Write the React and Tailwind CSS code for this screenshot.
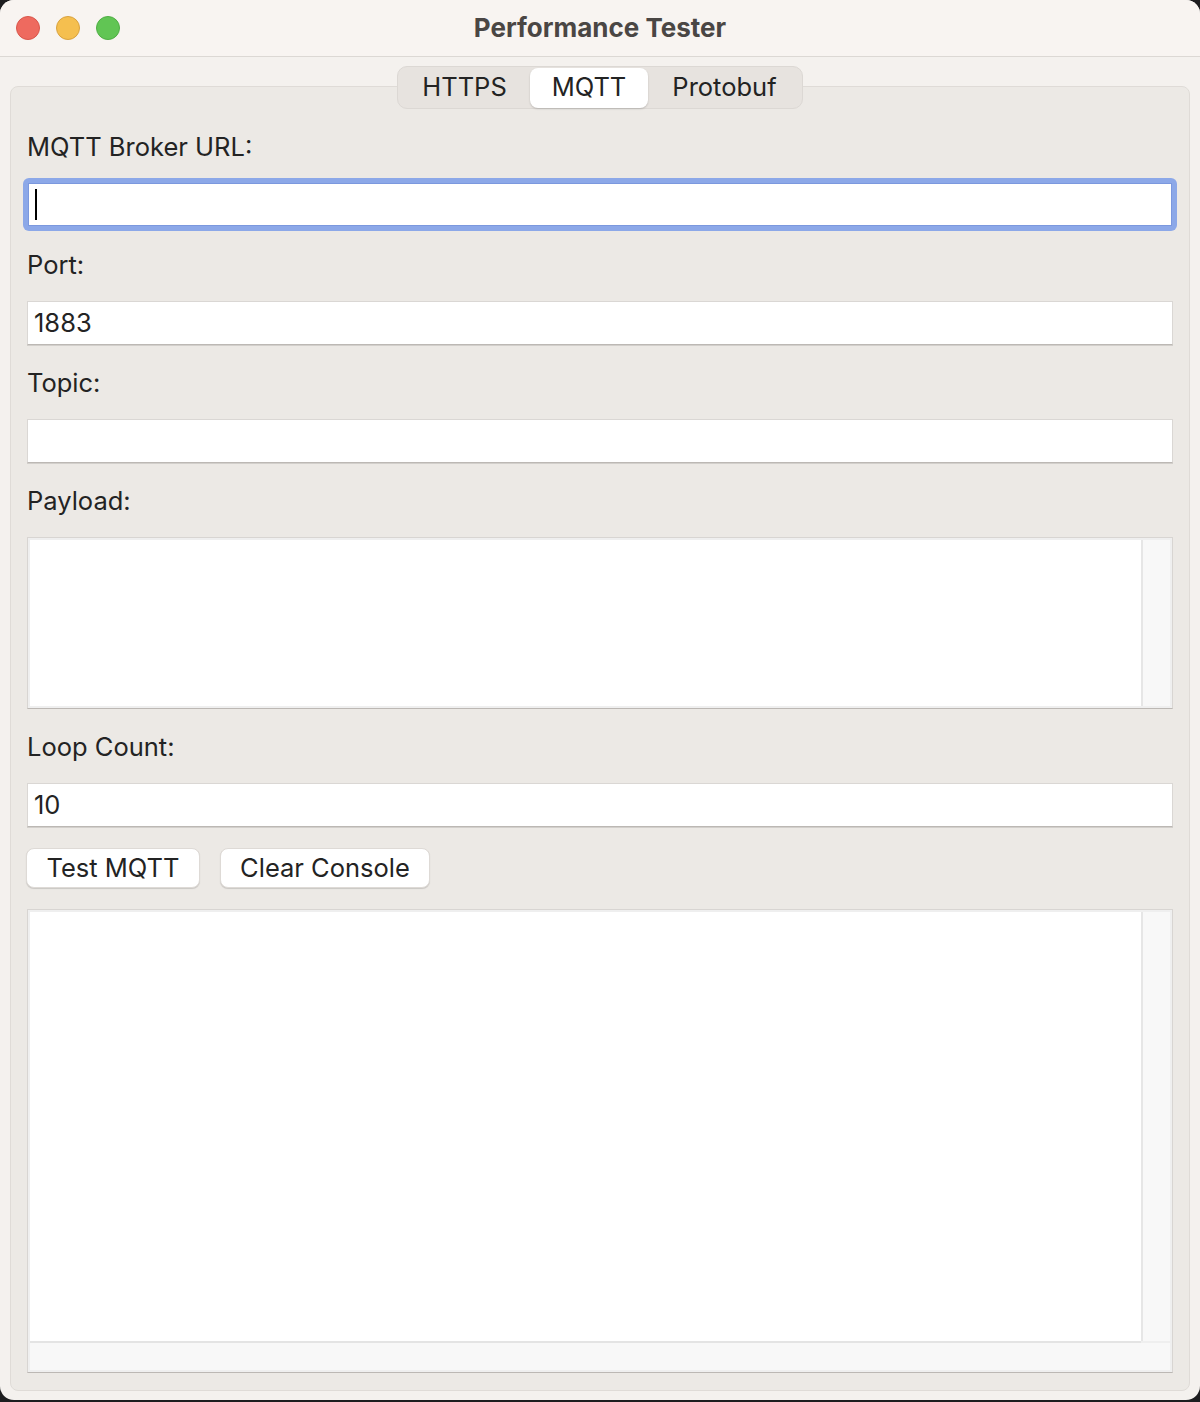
import React from "react";

const font = { fontFamily: "Inter, 'Noto Sans', 'Liberation Sans', sans-serif" };

function Label({ children, className = "" }) {
  return (
    <div className={"h-[30px] leading-[30px] text-[25.5px] text-[#232323] " + className}>
      {children}
    </div>
  );
}

function Input({ value, className = "" }) {
  return (
    <div
      className={
        "h-[44px] bg-white border border-[#dad7d4] border-b-[#bcb8b4] shadow-[0_1px_0_#d2cfcb] flex items-center px-[6px] text-[25.5px] text-[#232323] " +
        className
      }
    >
      {value}
    </div>
  );
}

function TextArea({ height, hscroll }) {
  return (
    <div
      className="bg-[#efefef] border border-[#d8d5d2] border-b-[#bcb8b4] p-[2px] flex flex-col"
      style={{ height }}
    >
      <div className="flex-1 flex min-h-0">
        <div className="flex-1 bg-white" />
        <div className="w-[2px] bg-[#e6e6e6]" />
        <div className="w-[27px] bg-[#f8f8f8]" />
      </div>
      {hscroll && (
        <div className="flex flex-col">
          <div className="h-[2px] bg-[#e4e4e4] mr-[29px]" />
          <div className="h-[27px] bg-[#f8f8f8]" />
        </div>
      )}
    </div>
  );
}

export default function App() {
  return (
    <div className="w-[1200px] h-[1402px] bg-[#1d1d1f]" style={font}>
      <div className="w-[1200px] h-[1400px] bg-[#f4f1ee] rounded-[14px] overflow-hidden flex flex-col">
        {/* Title bar */}
        <div className="relative h-[57px] bg-[#f8f4f1] border-b border-[#dcd8d4] flex items-center justify-center shrink-0">
          <div className="absolute left-[16px] top-[16px] flex gap-[16px]">
            <div className="w-[24px] h-[24px] rounded-full bg-[#ee6a5f] border border-[#d9564b]" />
            <div className="w-[24px] h-[24px] rounded-full bg-[#f5bf4f] border border-[#d9a23f]" />
            <div className="w-[24px] h-[24px] rounded-full bg-[#61c554] border border-[#4fae44]" />
          </div>
          <div className="text-[26px] font-bold text-[#4a4644] -mt-[2px]">Performance Tester</div>
        </div>

        {/* Body */}
        <div className="flex flex-col items-center flex-1">
          {/* Segmented control */}
          <div className="relative z-10 mt-[9px] h-[43px] w-[406px] rounded-[10px] bg-[#e7e3df] border border-[#dcd8d4] flex items-center px-[1px] text-[25.5px] text-[#232323]">
            <div className="w-[131px] text-center">HTTPS</div>
            <div className="w-[118px] h-[40px] bg-white rounded-[8px] shadow-[0_1px_2px_rgba(0,0,0,0.18)] flex items-center justify-center">
              MQTT
            </div>
            <div className="flex-1 text-center">Protobuf</div>
          </div>

          {/* Panel */}
          <div className="-mt-[23px] w-[1180px] h-[1305px] rounded-[8px] bg-[#ece9e5] border border-[#dfdbd7] px-[16px] pt-[45px] flex flex-col">
            <Label>MQTT Broker URL:</Label>
            {/* focused input */}
            <div className="mt-[16px] -mx-[4px] h-[53px] rounded-[6px] bg-[#8ca8e8] p-[5px]">
              <div className="h-full bg-white border border-[#7b98de] flex items-center px-[6px]">
                <div className="w-[2px] h-[31px] bg-black" />
              </div>
            </div>
            <Label className="mt-[19px]">Port:</Label>
            <Input value="1883" className="mt-[21px]" />
            <Label className="mt-[23px]">Topic:</Label>
            <Input value="" className="mt-[21px]" />
            <Label className="mt-[23px]">Payload:</Label>
            <div className="mt-[21px]">
              <TextArea height={172} />
            </div>
            <Label className="mt-[23px]">Loop Count:</Label>
            <Input value="10" className="mt-[21px]" />
            <div className="mt-[21px] flex gap-[20px] -ml-[1px]">
              <div className="w-[174px] h-[40px] bg-white rounded-[8px] border border-[#dedad6] shadow-[0_1px_1px_rgba(0,0,0,0.15)] flex items-center justify-center text-[25.5px] text-[#232323]">
                Test MQTT
              </div>
              <div className="w-[210px] h-[40px] bg-white rounded-[8px] border border-[#dedad6] shadow-[0_1px_1px_rgba(0,0,0,0.15)] flex items-center justify-center text-[25.5px] text-[#232323]">
                Clear Console
              </div>
            </div>
            <div className="mt-[21px]">
              <TextArea height={464} hscroll />
            </div>
          </div>
        </div>
      </div>
    </div>
  );
}
